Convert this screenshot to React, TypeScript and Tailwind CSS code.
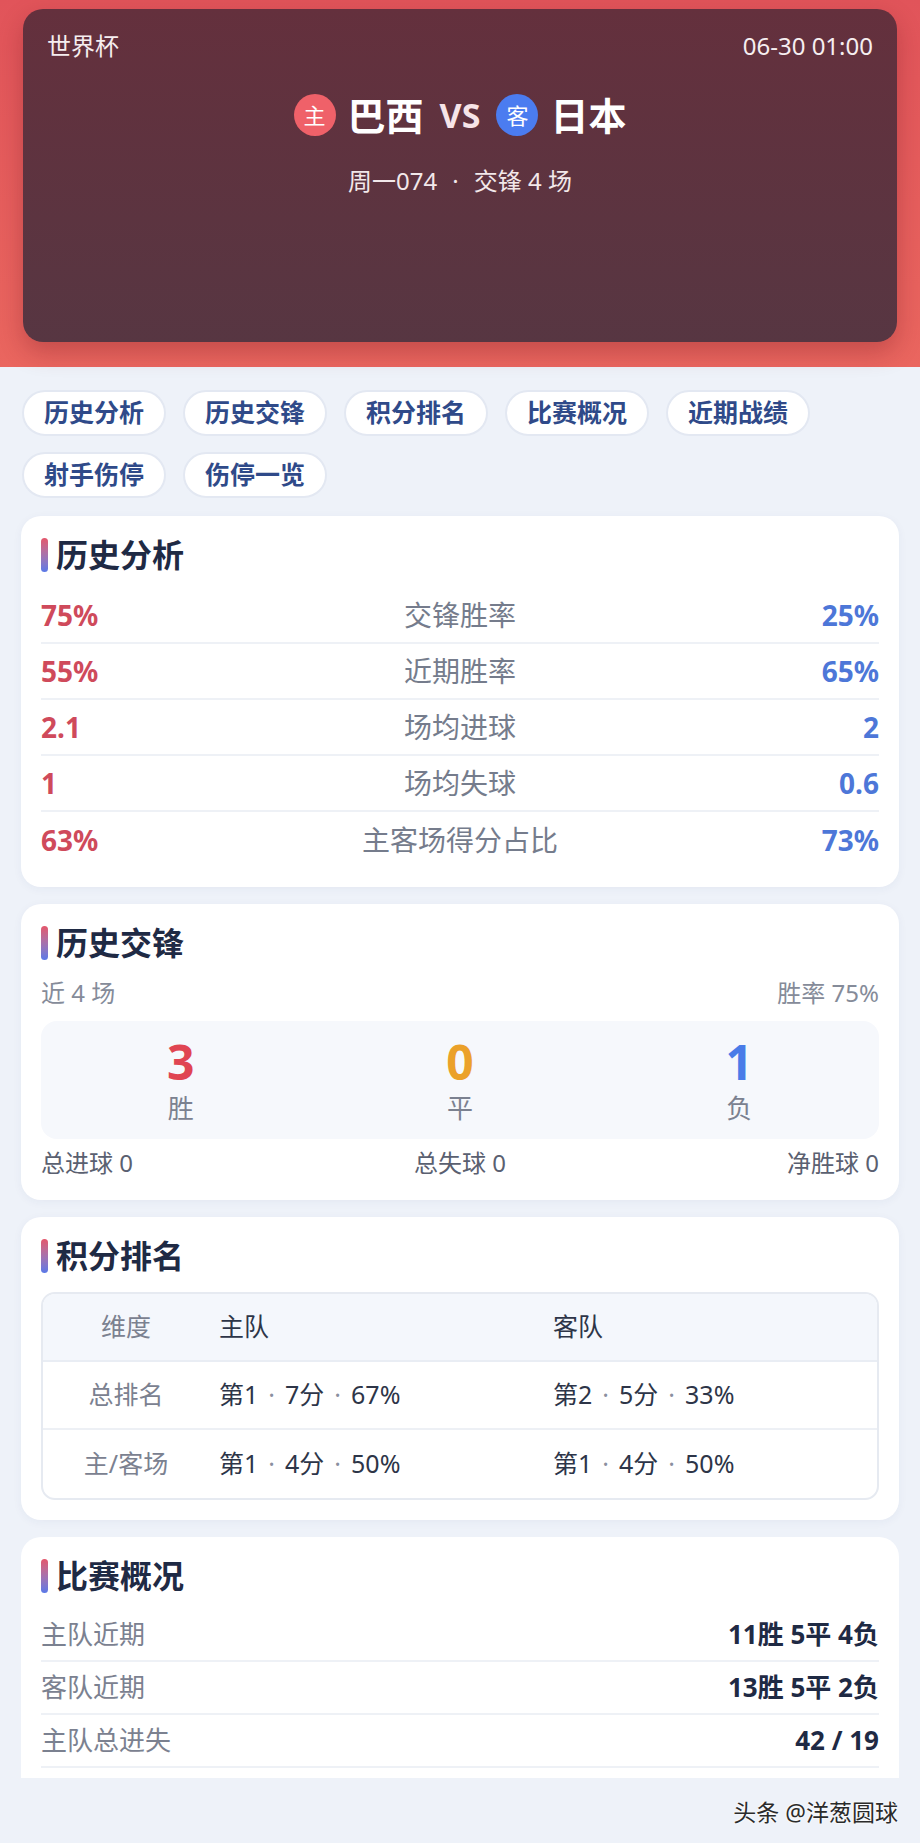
const tabs = ['历史分析', '历史交锋', '积分排名', '比赛概况', '近期战绩', '射手伤停', '伤停一览'];

const analysis = [
  ['75%', '交锋胜率', '25%'],
  ['55%', '近期胜率', '65%'],
  ['2.1', '场均进球', '2'],
  ['1', '场均失球', '0.6'],
  ['63%', '主客场得分占比', '73%'],
];

const ranking: [string, string[], string[]][] = [
  ['总排名', ['第1', '7分', '67%'], ['第2', '5分', '33%']],
  ['主/客场', ['第1', '4分', '50%'], ['第1', '4分', '50%']],
];

const overview = [
  ['主队近期', '11胜 5平 4负'],
  ['客队近期', '13胜 5平 2负'],
  ['主队总进失', '42 / 19'],
];

function SectionTitle({ children }: { children: React.ReactNode }) {
  return (
    <div className="flex h-[34px] items-center gap-[8px]">
      <span className="h-[34px] w-[7px] rounded-full bg-linear-to-b from-[#e4556a] to-[#5878e8]" />
      <h2 className="text-[32px] font-bold leading-none text-[#1f2a44]">{children}</h2>
    </div>
  );
}

function Card({ children, className = '' }: { children: React.ReactNode; className?: string }) {
  return (
    <section className={`rounded-[20px] bg-white px-5 pt-[22px] shadow-[0_2px_10px_rgba(40,60,110,0.05)] ${className}`}>
      {children}
    </section>
  );
}

function Dotted({ parts }: { parts: string[] }) {
  return (
    <span className="pl-[10px] text-[#2d3548]">
      {parts.map((p, i) => (
        <span key={i}>
          {i > 0 && <span className="mx-[10px] text-[#8a90a0]">·</span>}
          {p}
        </span>
      ))}
    </span>
  );
}

export default function App() {
  return (
    <div className="h-[1843px] overflow-hidden bg-[#eef2f9] font-['Noto_Sans','Noto_Sans_CJK_SC',sans-serif]">
      {/* Header */}
      <div className="bg-linear-to-b from-[#e1545a] to-[#ea665f] px-[23px] pb-[25px] pt-[9px]">
        <div className="h-[333px] rounded-[20px] bg-linear-to-b from-[#64303d] to-[#573642] px-6 pt-[21px] shadow-[0_10px_24px_rgba(110,20,30,0.3)]">
          <div className="flex h-[32px] items-center justify-between text-[24px] leading-[32px] text-[#f6eef0]">
            <span>世界杯</span>
            <span>06-30 01:00</span>
          </div>
          <div className="mt-[29px] flex h-[48px] items-center justify-center">
            <span className="flex h-[42px] w-[42px] items-center justify-center rounded-full bg-[#ef6169] text-[22px] text-white">主</span>
            <span className="ml-[12px] text-[38px] font-bold leading-none text-white">巴西</span>
            <span className="ml-[16px] text-[34px] font-bold leading-none text-[#f7e4e8]">VS</span>
            <span className="ml-[16px] flex h-[42px] w-[42px] items-center justify-center rounded-full bg-[#4b7cf0] text-[22px] text-white">客</span>
            <span className="ml-[12px] text-[38px] font-bold leading-none text-white">日本</span>
          </div>
          <div className="mt-[26px] flex h-[32px] items-center justify-center text-[24px] leading-[32px] text-[#f2e8ea]">
            <span>周一074</span>
            <span className="mx-[15px]">·</span>
            <span>交锋 4 场</span>
          </div>
        </div>
      </div>

      {/* Tabs */}
      <div className="flex flex-wrap gap-x-[17px] gap-y-[16px] px-[22px] pt-[23px]">
        {tabs.map((t) => (
          <span
            key={t}
            className="flex h-[46px] w-[144px] items-center justify-center rounded-full border-2 border-[#e3e8f2] bg-white text-[25px] font-bold text-[#2f4a89]"
          >
            {t}
          </span>
        ))}
      </div>

      <div className="mt-[18px] flex flex-col gap-[17px] px-[21px]">
        {/* 历史分析 */}
        <Card className="pb-[19px]">
          <SectionTitle>历史分析</SectionTitle>
          <div className="mt-[16px]">
            {analysis.map(([l, m, r], i) => (
              <div
                key={m}
                className={`grid h-[56px] grid-cols-[1fr_auto_1fr] items-center ${i < analysis.length - 1 ? 'border-b-2 border-[#eef1f6]' : ''}`}
              >
                <span className="text-[28px] font-bold text-[#cf4a5b]">{l}</span>
                <span className="text-[28px] text-[#757c8c]">{m}</span>
                <span className="text-right text-[28px] font-bold text-[#4d77d8]">{r}</span>
              </div>
            ))}
          </div>
        </Card>

        {/* 历史交锋 */}
        <Card className="pb-[21px]">
          <SectionTitle>历史交锋</SectionTitle>
          <div className="mt-[17px] flex h-[32px] items-center justify-between text-[24px] text-[#858b99]">
            <span>近 4 场</span>
            <span>胜率 75%</span>
          </div>
          <div className="mt-[12px] grid h-[118px] grid-cols-3 rounded-[16px] bg-[#f6f8fc]">
            {[
              ['3', '胜', 'text-[#e04552]'],
              ['0', '平', 'text-[#eba12a]'],
              ['1', '负', 'text-[#4a7ce8]'],
            ].map(([n, l, c]) => (
              <div key={l} className="flex flex-col items-center pt-[16px]">
                <span className={`text-[48px] font-bold leading-[50px] ${c}`}>{n}</span>
                <span className="mt-[6px] text-[26px] leading-[30px] text-[#7b8190]">{l}</span>
              </div>
            ))}
          </div>
          <div className="mt-[8px] flex h-[32px] items-center justify-between text-[24px] text-[#5a6070]">
            <span>总进球 0</span>
            <span>总失球 0</span>
            <span>净胜球 0</span>
          </div>
        </Card>

        {/* 积分排名 */}
        <Card className="pb-[20px]">
          <SectionTitle>积分排名</SectionTitle>
          <div className="mt-[19px] overflow-hidden rounded-[14px] border-2 border-[#e6eaf1]">
            <div className="grid h-[68px] grid-cols-[166px_1fr_1fr] items-center border-b-2 border-[#e9edf4] bg-[#f4f7fc] text-[25px]">
              <span className="text-center text-[#7b8190]">维度</span>
              <span className="pl-[10px] text-[#2d3548]">主队</span>
              <span className="pl-[10px] text-[#2d3548]">客队</span>
            </div>
            {ranking.map(([k, a, b], i) => (
              <div
                key={k}
                className={`grid h-[68px] grid-cols-[166px_1fr_1fr] items-center text-[25px] ${i === 0 ? 'border-b-2 border-[#edf0f5]' : ''}`}
              >
                <span className="text-center text-[#7b8190]">{k}</span>
                <Dotted parts={a} />
                <Dotted parts={b} />
              </div>
            ))}
          </div>
        </Card>

        {/* 比赛概况 - cut off at the bottom of the capture */}
        <section className="h-[241px] overflow-hidden rounded-t-[20px] bg-white px-5 pt-[22px]">
          <SectionTitle>比赛概况</SectionTitle>
          <div className="mt-[16px]">
            {overview.map(([k, v]) => (
              <div key={k} className="flex h-[53px] items-center justify-between border-b-2 border-[#eef1f6]">
                <span className="text-[26px] text-[#7b8190]">{k}</span>
                <span className="text-[26px] font-bold text-[#1f2a44]">{v}</span>
              </div>
            ))}
          </div>
        </section>
      </div>

      {/* watermark */}
      <div className="mt-[19px] flex justify-end pr-[22px]">
        <span className="text-[23px] leading-[30px] text-[#2b2b2b] [text-shadow:0_0_3px_#fff,0_0_2px_#fff]">头条 @洋葱圆球</span>
      </div>
    </div>
  );
}
